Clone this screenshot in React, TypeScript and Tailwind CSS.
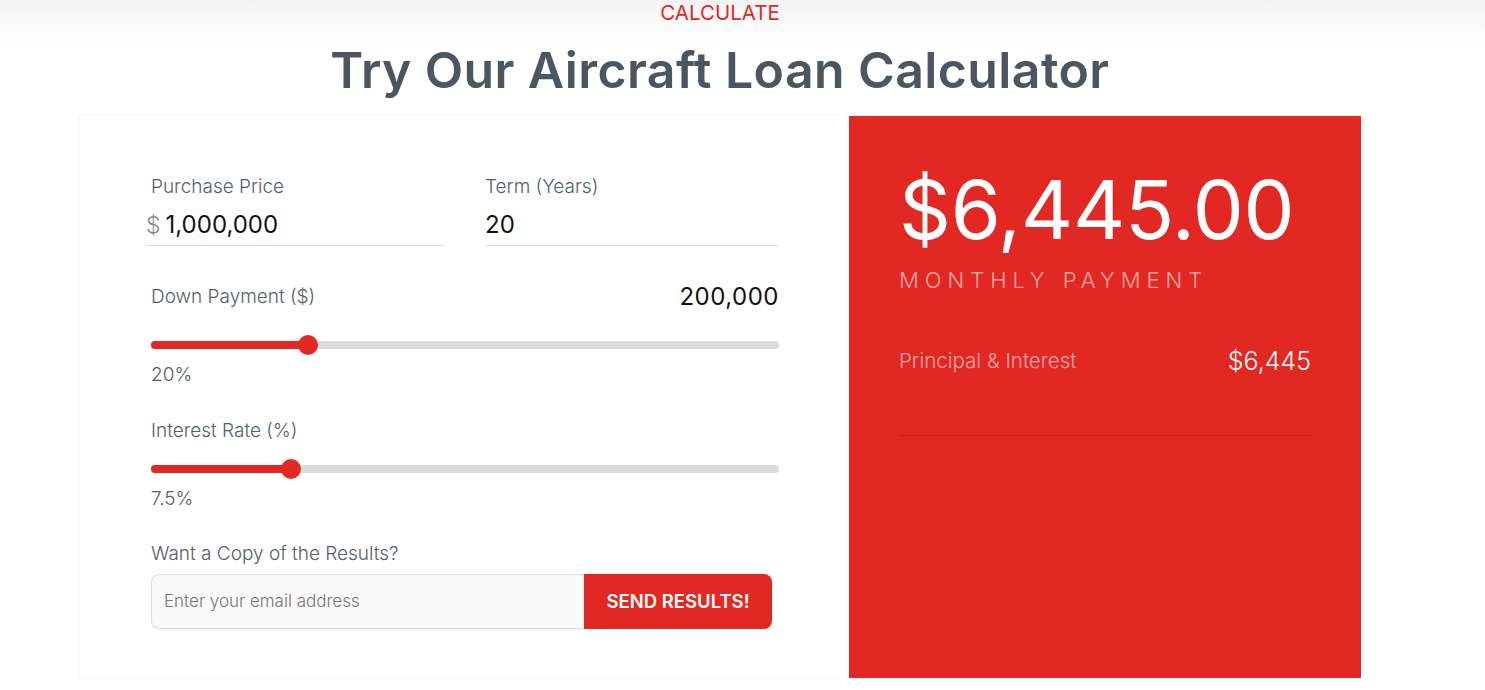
import React from 'react';

const font = { fontFamily: 'Inter, "Noto Sans", sans-serif' };

interface SliderProps {
    percent: number;
}

const Slider: React.FC<SliderProps> = ({ percent }) => (
    <div className="relative h-5 flex items-center">
        <div className="w-full h-2 bg-[#dcdcdc] rounded-full" />
        <div className="absolute left-0 h-2 bg-[#e22822] rounded-full" style={{ width: `${percent}%` }} />
        <div
            className="absolute w-5 h-5 -ml-2.5 rounded-full bg-[#e22822]"
            style={{ left: `${percent}%` }}
        />
    </div>
);

export default function App() {
    return (
        <div className="min-h-[690px] bg-white" style={font}>
            <div className="bg-gradient-to-b from-[#f4f4f4] to-white pt-[1px] h-[48px] pr-[45px]">
                <p className="text-center text-[20.5px] leading-6 text-[#e22822]">CALCULATE</p>
            </div>
            <h2 className="-mt-[6px] text-center text-[50px] leading-[56px] font-semibold text-[#4a5661] tracking-[0.4px] pr-[45px]">
                Try Our Aircraft Loan Calculator
            </h2>

            <div className="mt-[18px] ml-[80px] w-[1281px] flex">
                <div className="w-[769px] bg-white shadow-[0_0_3px_rgba(0,0,0,0.08)] pl-[71px] pr-[70px] pt-[59px] pb-[49px]">
                    <div className="grid grid-cols-2 gap-10 w-[628px]">
                        <div>
                            <label className="block text-[19px] text-[#55606b] font-light leading-6">Purchase Price</label>
                            <div className="mt-[10px] flex items-baseline border-b border-[#dcdcdc] pb-[4px] -ml-[5px]">
                                <span className="text-[23px] leading-8 text-[#888] font-light mr-[5px]">$</span>
                                <span className="text-[24px] text-[#111] leading-8">1,000,000</span>
                            </div>
                        </div>
                        <div>
                            <label className="block text-[19px] text-[#55606b] font-light leading-6">Term (Years)</label>
                            <div className="mt-[10px] flex items-baseline border-b border-[#dcdcdc] pb-[4px]">
                                <span className="text-[24px] text-[#111] leading-8">20</span>
                            </div>
                        </div>
                    </div>

                    <div className="mt-[33px] w-[628px] flex justify-between items-center">
                        <span className="text-[19px] text-[#55606b] font-light">Down Payment ($)</span>
                        <span className="text-[24px] text-[#111] tracking-[0.5px]">200,000</span>
                    </div>
                    <div className="mt-[20px] w-[628px]">
                        <Slider percent={25} />
                    </div>
                    <p className="mt-[6px] text-[19px] text-[#55606b] font-light">20%</p>

                    <p className="mt-[27px] text-[19px] text-[#55606b] font-light">Interest Rate (%)</p>
                    <div className="mt-[14px] w-[628px]">
                        <Slider percent={22.3} />
                    </div>
                    <p className="mt-[6px] text-[19px] text-[#55606b] font-light">7.5%</p>

                    <p className="mt-[26px] text-[19px] text-[#55606b] font-light">Want a Copy of the Results?</p>
                    <div className="mt-[6px] flex w-[621px] h-[55px]">
                        <input
                            className="flex-1 bg-[#f9f9f9] border border-[#dddddd] border-r-0 rounded-l-lg px-3 text-[17px] font-light text-[#333] placeholder:text-[#777] outline-none"
                            placeholder="Enter your email address"
                        />
                        <button className="w-[188px] bg-[#e22822] text-white text-[18.5px] font-semibold rounded-r-lg">
                            SEND RESULTS!
                        </button>
                    </div>
                </div>

                <div className="w-[512px] bg-[#e22822] pl-[50px] pr-[50px] pt-[46px]">
                    <p className="text-[81px] leading-[96px] text-white font-normal tracking-[-0.3px]">$6,445.00</p>
                    <p className="mt-[6px] text-[22px] text-white/60 font-light tracking-[6px]">MONTHLY PAYMENT</p>
                    <div className="mt-[46px] flex justify-between items-center">
                        <span className="text-[20.5px] text-white/60 font-light">Principal &amp; Interest</span>
                        <span className="text-[25px] text-white font-light">$6,445</span>
                    </div>
                    <div className="mt-[54px] border-t border-[#c9221d]" />
                </div>
            </div>
        </div>
    );
}
